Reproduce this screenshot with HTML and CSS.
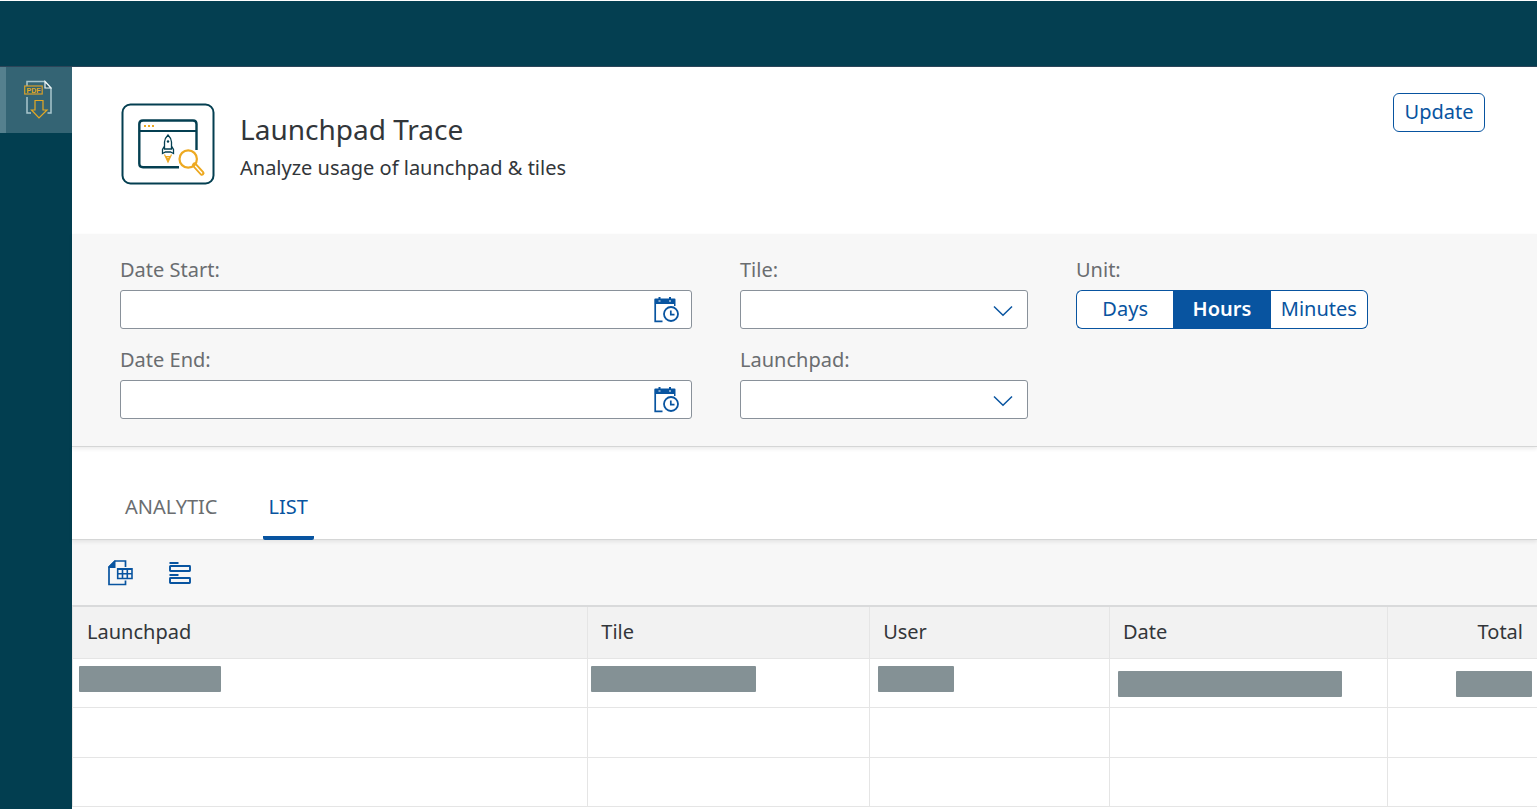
FILE: index.html
```html
<!DOCTYPE html>
<html lang="en">
<head>
<meta charset="utf-8">
<title>Launchpad Trace</title>
<link rel="stylesheet" href="styles.css">
</head>
<body>
<div class="app">
  <header class="shell-bar"></header>
  <div class="body">
    <nav class="side-nav" aria-label="Tools">
      <button class="side-item" type="button" aria-label="Export to PDF">
        <svg class="pdf-icon" width="28" height="40" viewBox="0 0 28 40" fill="none">
          <path d="M3 13V1.500H21L27 8V33H23.500M3 17V33H7" stroke="#a9c6cd" stroke-width="1.500"/>
          <path d="M21 1.500V8H27Z" fill="#2c5663" stroke="#eef5f6" stroke-width="1.200"/>
          <rect x="0.700" y="6" width="17.500" height="8" fill="#2f6272" stroke="#d9a02b" stroke-width="1.200"/>
          <text x="9.500" y="12.600" class="pdf-text" text-anchor="middle">PDF</text>
          <path d="M11 20.500H19V30H23L15 38L7.500 30H11Z" stroke="#e5a823" stroke-width="1.200"/>
        </svg>
      </button>
    </nav>
    <main class="page">
      <section class="title-bar">
        <svg class="logo" width="94" height="82" viewBox="0 0 94 82" fill="none">
          <rect x="1.500" y="1.500" width="91" height="79" rx="8" fill="#fff" stroke="#043f51" stroke-width="2"/>
          <path d="M58 64.200H22Q18.300 64.200 18.300 60.500V21Q18.300 17.500 22 17.500H72Q75.500 17.500 75.500 21V47" stroke="#043f51" stroke-width="2.400"/>
          <path d="M18.300 28H75.500" stroke="#043f51" stroke-width="2"/>
          <path d="M23 23h2m2 0h2m2 0h2" stroke="#eda921" stroke-width="2"/>
          <path d="M43.500 46V39C43.500 36 45 34 47 32C49 34 50.500 36 50.500 39V46ZM43.500 43L41.500 46.500V50.500L44.500 49H49.500L52.500 50.500V46.500L50.500 43" stroke="#043f51" stroke-width="1.300"/>
          <circle cx="47" cy="38.500" r="1.200" fill="#043f51"/>
          <path d="M43.500 51.500L47 59L50.500 51.500M45 53.500H49L47 56Z" stroke="#eda921" stroke-width="1.200"/>
          <circle cx="67.200" cy="56" r="8.700" fill="#fff" stroke="#eda921" stroke-width="2.200"/>
          <path d="M73.500 62L81 70.200" stroke="#eda921" stroke-width="5" stroke-linecap="round"/>
          <path d="M74.500 63.200L80.700 70" stroke="#fff" stroke-width="1.300" stroke-linecap="round"/>
        </svg>
        <div class="titles">
          <h1 class="title">Launchpad Trace</h1>
          <p class="subtitle">Analyze usage of launchpad &amp; tiles</p>
        </div>
        <button class="btn" type="button">Update</button>
      </section>

      <form class="filters">
        <div class="field">
          <label for="start">Date Start:</label>
          <div class="control">
            <input class="box" id="start" type="text">
            <svg class="date-icon" width="26" height="26" viewBox="0 0 26 26" fill="none"><use href="#calendar"/></svg>
          </div>
        </div>
        <div class="field">
          <label for="tile">Tile:</label>
          <div class="control">
            <select class="box" id="tile"><option></option></select>
            <svg class="chevron" width="20" height="12" viewBox="0 0 20 12" fill="none"><path d="M1 1.500L10 10.300L19 1.500" stroke="#0854a0" stroke-width="1.500"/></svg>
          </div>
        </div>
        <div class="field">
          <span class="caption" id="unit">Unit:</span>
          <div class="segments" role="group" aria-labelledby="unit">
            <button class="segment" type="button" aria-pressed="false">Days</button>
            <button class="segment selected" type="button" aria-pressed="true">Hours</button>
            <button class="segment" type="button" aria-pressed="false">Minutes</button>
          </div>
        </div>
        <div class="field">
          <label for="end">Date End:</label>
          <div class="control">
            <input class="box" id="end" type="text">
            <svg class="date-icon" width="26" height="26" viewBox="0 0 26 26" fill="none">
              <g id="calendar">
                <path d="M1.200 7V24.300H8.500" stroke="#0854a0" stroke-width="1.700"/>
                <path d="M0.300 2.500Q0.300 1.500 1.300 1.500H4.500V0H6.500V1.500H15V0H17V1.500H20.500Q21.500 1.500 21.500 2.500V9H20V7H0.300Z" fill="#0854a0"/>
                <path d="M4.500 4h2M15 4h2" stroke="#fff" stroke-width="1"/>
                <circle cx="17" cy="17" r="7" stroke="#0854a0" stroke-width="1.800"/>
                <path d="M16.800 13.500V17.700H20.500" stroke="#0854a0" stroke-width="1.700"/>
              </g>
            </svg>
          </div>
        </div>
        <div class="field">
          <label for="launchpad">Launchpad:</label>
          <div class="control">
            <select class="box" id="launchpad"><option></option></select>
            <svg class="chevron" width="20" height="12" viewBox="0 0 20 12" fill="none"><path d="M1 1.500L10 10.300L19 1.500" stroke="#0854a0" stroke-width="1.500"/></svg>
          </div>
        </div>
      </form>

      <div class="tabs" role="tablist">
        <button class="tab" type="button" role="tab" aria-selected="false">ANALYTIC</button>
        <button class="tab active" type="button" role="tab" aria-selected="true">LIST</button>
      </div>

      <div class="toolbar">
        <button class="tool" type="button" aria-label="Export to spreadsheet">
          <svg width="25" height="26" viewBox="0 0 25 26" fill="none">
            <path d="M17.500 7V1H7L1 7V24.500H17.500V20.500" stroke="#0854a0" stroke-width="1.700"/>
            <path d="M6.500 0.500H7.500V8H0.500V6.500Z" fill="#0854a0"/>
            <path d="M9.700 8.800H24V18.500H9.700ZM9.700 9.300H24M9.700 13.700H24M14.500 8.700V18.700M19.300 8.700V18.700" stroke="#0854a0" stroke-width="1.600"/>
          </svg>
        </button>
        <button class="tool" type="button" aria-label="Group rows">
          <svg width="22" height="22" viewBox="0 0 22 22" fill="none">
            <path d="M0.500 1H9.500M0.500 13H9.500" stroke="#0854a0" stroke-width="2"/>
            <rect x="1" y="4" width="20" height="5" rx="0.500" stroke="#0854a0" stroke-width="1.900"/>
            <rect x="1" y="16" width="20" height="5" rx="0.500" stroke="#0854a0" stroke-width="1.900"/>
          </svg>
        </button>
      </div>

      <table class="grid">
        <colgroup><col class="col-launchpad"><col class="col-tile"><col class="col-user"><col class="col-date"><col class="col-total"></colgroup>
        <thead><tr><th>Launchpad</th><th>Tile</th><th>User</th><th>Date</th><th class="num">Total</th></tr></thead>
        <tbody>
          <tr>
            <td><span class="mask mask-launchpad"></span></td>
            <td><span class="mask mask-tile"></span></td>
            <td class="roomy"><span class="mask mask-user"></span></td>
            <td class="roomy low"><span class="mask mask-date"></span></td>
            <td class="low"><span class="mask mask-total"></span></td>
          </tr>
          <tr><td></td><td></td><td></td><td></td><td></td></tr>
          <tr><td></td><td></td><td></td><td></td><td></td></tr>
        </tbody>
      </table>
    </main>
  </div>
</div>
</body>
</html>
```
FILE: styles.css
```css
* { box-sizing: border-box; }
body {
  margin: 0;
  background: #fff;
  color: #32363a;
  font: 20px/24px "Noto Sans", "Open Sans", sans-serif;
}
button, input, select { font: inherit; margin: 0; }
svg { display: block; }

.app { display: flex; flex-direction: column; min-height: 100vh; padding-top: 1px; }
.shell-bar { height: 66px; background: #043f51; border-bottom: 1px solid #2c4559; }
.body { display: flex; flex: 1; }
.side-nav { flex: none; width: 72px; background: #023e50; }
.side-item {
  display: block;
  width: 100%;
  height: 66px;
  padding: 0 0 0 18px;
  border: 0;
  border-left: 6px solid #55808e;
  background: #346474;
}
.pdf-text { font: bold 7px "Liberation Sans", sans-serif; fill: #e5a823; }
.page { flex: 1; min-width: 0; }

.title-bar { display: flex; align-items: flex-start; gap: 25px; height: 167px; padding: 26px 52px 0 49px; }
.logo { flex: none; margin-top: 10px; }
.titles { flex: 1; margin-top: 17px; }
.title { margin: 0; font-size: 28px; line-height: 38px; font-weight: 400; }
.subtitle { margin: 8px 0 0; }
.btn {
  height: 39px;
  min-width: 92px;
  padding: 0 10px 2px;
  border: 1px solid #0854a0;
  border-radius: 6px;
  background: #fff;
  color: #0854a0;
}

.filters {
  position: relative;
  z-index: 1;
  display: grid;
  grid-template-columns: 572fr 288fr 413fr;
  gap: 19px 48px;
  padding: 24px 48px 27px;
  background: #f7f7f7;
  border-bottom: 1px solid #d5d6d6;
  box-shadow: 0 2px 4px rgba(0, 0, 0, 0.08);
}
.field label, .caption { display: block; margin-bottom: 8px; color: #6a6d70; }
.control { position: relative; }
.box {
  display: block;
  width: 100%;
  height: 39px;
  padding: 0 44px 0 12px;
  border: 1px solid #89919a;
  border-radius: 3px;
  background: #fff;
  color: #32363a;
  appearance: none;
}
.date-icon { position: absolute; right: 12px; top: 7px; }
.chevron { position: absolute; right: 15px; top: 15px; }
.segments { display: grid; grid-template-columns: repeat(3, 1fr); width: 292px; }
.segment {
  height: 39px;
  padding: 0 8px 2px;
  border: 1px solid #0854a0;
  border-width: 1px 0;
  background: #fff;
  color: #0854a0;
}
.segment:first-child { border-left-width: 1px; border-radius: 6px 0 0 6px; }
.segment:last-child { border-right-width: 1px; border-radius: 0 6px 6px 0; }
.segment.selected { background: #0854a0; color: #fff; font-weight: 600; }

.tabs {
  position: relative;
  display: flex;
  gap: 39px;
  height: 93px;
  padding: 30px 47px 0;
  border-bottom: 1px solid #d5d6d6;
  box-shadow: 0 2px 4px rgba(0, 0, 0, 0.08);
}
.tab { margin-bottom: -1px; padding: 0 6px; border: 0; border-bottom: 4px solid transparent; background: none; color: #6a6d70; }
.tab.active { border-bottom-color: #0854a0; border-radius: 0 0 2px 2px; color: #0854a0; }

.toolbar { display: flex; align-items: center; gap: 36px; height: 65px; padding-left: 36px; background: #f7f7f7; }
.tool { padding: 0; border: 0; background: none; }

.grid { width: 100%; table-layout: fixed; border-collapse: separate; border-spacing: 0; border-top: 2px solid #d9dadb; border-left: 1px solid #e5e5e5; }
.col-launchpad { width: 35.200%; }
.col-tile { width: 19.250%; }
.col-user { width: 16.380%; }
.col-date { width: 18.980%; }
.grid th { height: 52px; padding: 0 14px 2px 13px; background: #f2f2f2; font-weight: 400; text-align: left; }
.grid th:first-child { padding-left: 14px; }
.grid .num { text-align: right; }
.grid th, .grid td { border-right: 1px solid #e5e5e5; border-bottom: 1px solid #e5e5e5; }
.grid th:last-child, .grid td:last-child { border-right: 0; }
.grid td { height: 49px; padding: 7px 5px 0 3px; vertical-align: top; }
.grid td:first-child { padding-left: 6px; }
.grid .roomy { padding-left: 8px; }
.grid .low { padding-top: 12px; }
.grid tbody tr:nth-child(2) td { height: 50px; }
.mask { display: block; height: 26px; border-radius: 1px; background: #849195; }
.mask-launchpad { width: 142px; }
.mask-tile { width: 165px; }
.mask-user { width: 76px; }
.mask-date { width: 224px; }
.mask-total { width: 76px; margin-left: auto; }
```
